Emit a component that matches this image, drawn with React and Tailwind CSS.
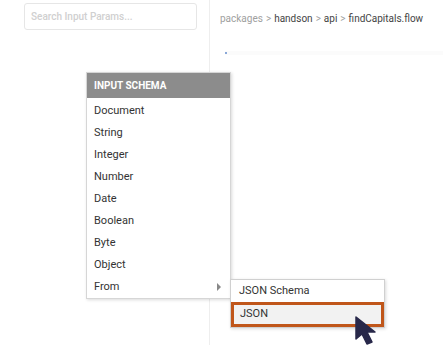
import React from "react";

const schemaTypes = [
  "Document",
  "String",
  "Integer",
  "Number",
  "Date",
  "Boolean",
  "Byte",
  "Object",
];

function Cursor() {
  return (
    <svg width="32" height="30" viewBox="0 0 32 30" className="absolute left-[354px] top-[316px]">
      <path
        d="M2 1 L2 23 L8 18 L13 28 L18 26 L13 16 L21 16 Z"
        fill="#28284a"
        stroke="#28284a"
        strokeWidth="1.5"
        strokeLinejoin="round"
      />
    </svg>
  );
}

export default function App() {
  return (
    <div
      className="relative flex h-[345px] w-[443px] overflow-hidden bg-white"
      style={{ fontFamily: "Roboto, 'Liberation Sans', sans-serif" }}
    >
      {/* left panel */}
      <div className="w-[210px] shrink-0 border-r border-[#eeeeee] pl-[24px] pt-[3px]">
        <div className="flex h-[27px] w-[173px] items-center rounded-[3px] border border-[#e6e6e6] px-[6px] text-[10px] font-medium text-[#d0d0d0]">
          Search Input Params...
        </div>
      </div>

      {/* right panel */}
      <div className="flex min-w-0 flex-1 flex-col">
        <div className="flex h-[37px] items-center gap-[3px] whitespace-nowrap pl-[10px] text-[10px] text-[#444]">
          <span className="text-[#a0a0a0]">packages</span>
          <span className="text-[#a0a0a0]">&gt;</span>
          <span>handson</span>
          <span className="text-[#a0a0a0]">&gt;</span>
          <span>api</span>
          <span className="text-[#a0a0a0]">&gt;</span>
          <span>findCapitals.flow</span>
        </div>
        <div className="ml-[15px] mt-[14px] flex h-[4px] items-center bg-[#fbfbfb]">
          <div className="h-[2px] w-[2px] bg-[#8aa8d8]" />
        </div>
      </div>

      {/* context menu */}
      <div className="absolute left-[86px] top-[72px] w-[145px] border border-[#d6d6d6] bg-white shadow-[1px_1px_3px_rgba(0,0,0,0.15)]">
        <div className="flex h-[25px] items-center bg-[#8c8c8c] px-[7px] text-[10px] font-bold text-white">
          INPUT SCHEMA
        </div>
        <div className="pt-[2px]">
          {schemaTypes.map((t) => (
            <div key={t} className="flex h-[22px] items-center px-[7px] text-[11px] text-[#333]">
              {t}
            </div>
          ))}
          <div className="flex h-[22px] items-center justify-between pl-[7px] pr-[9px] text-[11px] text-[#333]">
            <span>From</span>
            <span className="h-0 w-0 border-y-[4px] border-l-[4px] border-y-transparent border-l-[#888]" />
          </div>
        </div>
      </div>

      {/* submenu */}
      <div className="absolute left-[230px] top-[279px] w-[155px] border border-[#d0d0d0] bg-white shadow-[1px_1px_3px_rgba(0,0,0,0.15)]">
        <div className="flex h-[22px] items-center px-[8px] text-[11px] text-[#333]">JSON Schema</div>
        <div className="flex h-[25px] items-center border-[3px] border-[#c0561a] bg-[#f2f2f2] px-[6px] text-[11px] text-[#333]">
          JSON
        </div>
      </div>

      <Cursor />
    </div>
  );
}
